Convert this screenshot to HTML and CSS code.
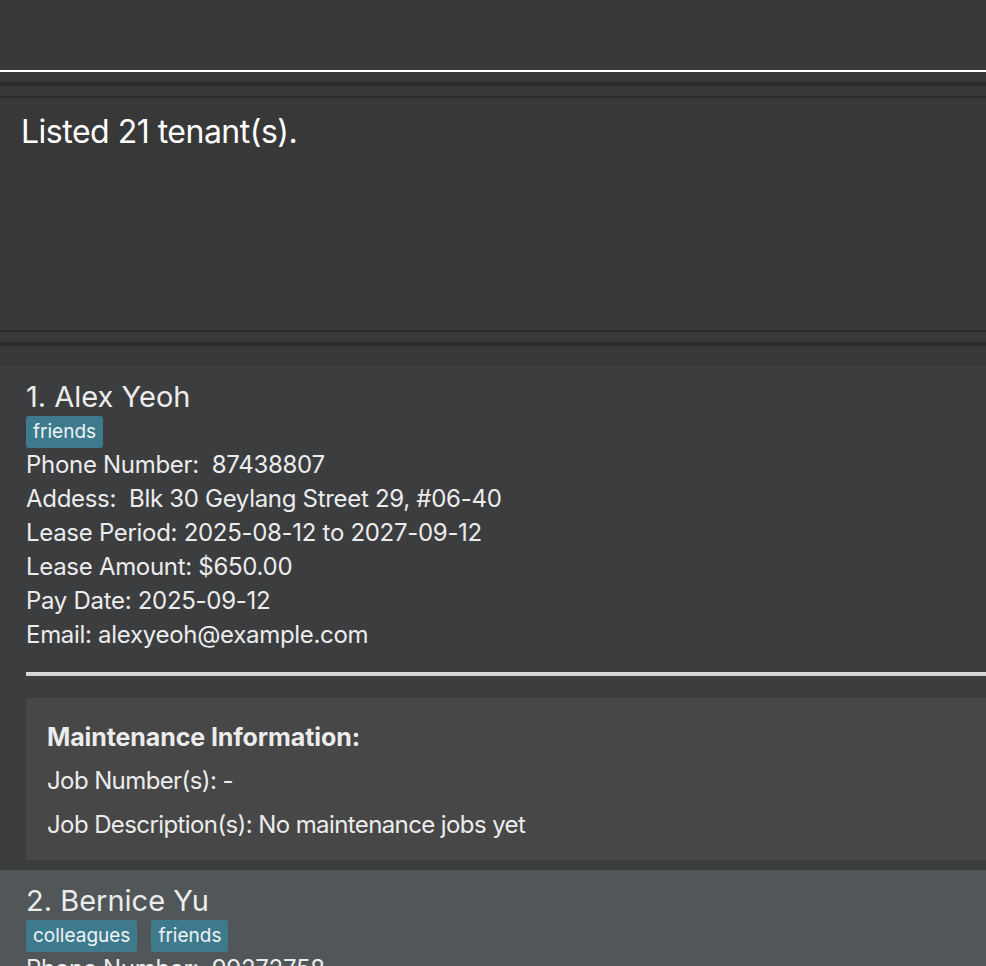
FILE: index.html
```html
<!DOCTYPE html>
<html lang="en">
<head>
<meta charset="utf-8">
<title>Tenants</title>
<link rel="stylesheet" href="styles.css">
</head>
<body>
<div class="app">
  <div class="command-box"></div>
  <div class="command-rule"></div>
  <div class="gap gap-a"></div>
  <div class="band band-thick"></div>
  <div class="gap gap-b"></div>
  <div class="band band-thin"></div>
  <div class="result">Listed 21 tenant(s).</div>
  <div class="band band-thin"></div>
  <div class="gap gap-b"></div>
  <div class="band band-thick"></div>
  <div class="gap gap-c"></div>
  <div class="list">
    <div class="card">
      <div class="name">1. Alex Yeoh</div>
      <div class="tags"><span class="tag">friends</span></div>
      <div class="field">Phone Number:&nbsp; 87438807</div>
      <div class="field">Addess:&nbsp; Blk 30 Geylang Street 29, #06-40</div>
      <div class="field">Lease Period: 2025-08-12 to 2027-09-12</div>
      <div class="field">Lease Amount: $650.00</div>
      <div class="field">Pay Date: 2025-09-12</div>
      <div class="field">Email: alexyeoh@example.com</div>
      <div class="divider"></div>
      <div class="maint">
        <div class="maint-title">Maintenance Information:</div>
        <div class="maint-line">Job Number(s): -</div>
        <div class="maint-line">Job Description(s): No maintenance jobs yet</div>
      </div>
    </div>
    <div class="card card-alt">
      <div class="name">2. Bernice Yu</div>
      <div class="tags"><span class="tag">colleagues</span><span class="tag">friends</span></div>
      <div class="field">Phone Number:&nbsp; 99272758</div>
      <div class="field">Addess:&nbsp; Blk 30 Lorong 3 Serangoon Gardens, #07-18</div>
    </div>
  </div>
</div>
</body>
</html>
```

FILE: styles.css
```css
* { box-sizing: border-box; }
html, body { margin: 0; padding: 0; }
body {
  background: #383838;
  font-family: Inter, "Noto Sans", sans-serif;
  color: #ececec;
  overflow: hidden;
  width: 986px;
  height: 966px;
}
.app {
  display: flex;
  flex-direction: column;
  width: 986px;
}
.command-box { height: 70px; background: #383838; }
.command-rule { height: 2px; background: #ffffff; }
.gap { background: #383838; }
.gap-a { height: 10px; }
.gap-b { height: 10px; }
.gap-c { height: 20px; }
.band { background: #2b2b2b; }
.band-thick { height: 4px; }
.band-thin { height: 2px; }
.result {
  height: 232px;
  padding: 14px 21px 0;
  font-size: 32px;
  line-height: 40px;
  color: #ffffff;
  letter-spacing: -0.5px;
}
.list { display: flex; flex-direction: column; }
.card {
  background: #3c3d3f;
  padding: 14px 0 10px 26px;
}
.card-alt {
  background: #515658;
  padding-top: 14px;
}
.name {
  font-size: 29px;
  line-height: 34px;
  letter-spacing: 0;
}
.tags {
  display: flex;
  gap: 14px;
  margin-top: 2px;
}
.tag {
  background: #3e7a8d;
  border-radius: 3px;
  height: 32px;
  padding: 0 7px;
  font-size: 19px;
  line-height: 32px;
  color: #eef3f5;
}
.field {
  font-size: 24px;
  line-height: 34px;
  letter-spacing: -0.3px;
  white-space: nowrap;
}
.divider {
  margin-top: 20px;
  height: 4px;
  background: #d4d4d4;
  border-top: 1px solid #dedede;
}
.maint {
  margin-top: 22px;
  background: #474747;
  padding: 17px 21px 13px;
}
.maint-title {
  font-size: 25px;
  line-height: 44px;
  font-weight: 700;
  letter-spacing: -0.1px;
}
.maint-line {
  font-size: 24px;
  line-height: 44px;
  letter-spacing: -0.6px;
  white-space: nowrap;
}
```
